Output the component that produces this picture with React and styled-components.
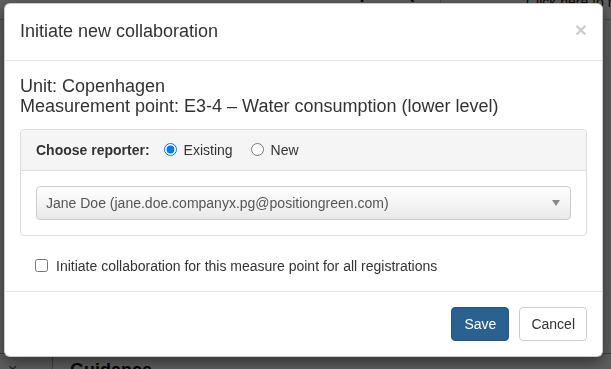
import React from "react";
import styled, { createGlobalStyle } from "styled-components";

const GlobalStyle = createGlobalStyle`
  html, body {
    margin: 0;
    padding: 0;
    background: #fff;
    font-family: "Liberation Sans", Arial, sans-serif;
    color: #333;
    font-size: 14px;
    line-height: 20px;
  }
  * { box-sizing: border-box; }
`;

const Page = styled.div`
  height: 369px;
  display: flex;
  flex-direction: column;
  justify-content: space-between;
  overflow: hidden;
`;

const PageTop = styled.div`
  display: grid;
  grid-template-columns: 178px 262px 86px 1fr;
  height: 40px;
  margin-top: -20px;
  border-bottom: 1px solid #ccc;
`;

const PageCell = styled.div`
  font-weight: ${(p) => (p.$bold ? "bold" : "normal")};
  font-size: ${(p) => (p.$bold ? "18px" : "14px")};
  color: #111;
  line-height: ${(p) => (p.$bold ? "25px" : "45px")};
  white-space: nowrap;
  overflow: hidden;
  border-left: ${(p) => (p.$line ? "1px solid #bbb" : "none")};
`;

const PageBottom = styled.div`
  display: grid;
  grid-template-columns: 52px 1fr;
  height: 16px;
  border-top: 1px solid #aaa;
`;

const BottomCell = styled.div`
  font-weight: ${(p) => (p.$bold ? "bold" : "normal")};
  font-size: ${(p) => (p.$bold ? "18px" : "16px")};
  color: ${(p) => (p.$bold ? "#111" : "#555")};
  padding-left: ${(p) => (p.$bold ? "17px" : "8px")};
  padding-top: 6px;
  line-height: 20px;
  border-left: ${(p) => (p.$line ? "1px solid #aaa" : "none")};
`;

const Overlay = styled.div`
  position: fixed;
  inset: 0;
  background: rgba(0, 0, 0, 0.63);
  padding: 3px 0 0 4px;
`;

const Modal = styled.div`
  width: 599px;
  background: #fff;
  border: 1px solid rgba(0, 0, 0, 0.2);
  border-radius: 6px;
  box-shadow: 0 5px 15px rgba(0, 0, 0, 0.5);
`;

const Header = styled.div`
  display: flex;
  justify-content: space-between;
  align-items: flex-start;
  padding: 15px;
  border-bottom: 1px solid #e5e5e5;
`;

const Title = styled.h4`
  margin: 0;
  font-size: 18px;
  font-weight: normal;
  line-height: 25.7px;
  color: #333;
`;

const Close = styled.button`
  border: 0;
  background: transparent;
  padding: 0;
  margin-top: 1px;
  font-family: "Liberation Sans", Arial, sans-serif;
  font-size: 21px;
  font-weight: bold;
  line-height: 20px;
  color: #000;
  opacity: 0.2;
  cursor: pointer;
`;

const Body = styled.div`
  padding: 15px;
`;

const Info = styled.div`
  font-size: 18px;
  line-height: 20px;
  margin-bottom: 13px;
`;

const Panel = styled.div`
  border: 1px solid #ddd;
  border-radius: 4px;
  margin-bottom: 20px;
`;

const PanelHeading = styled.div`
  display: flex;
  align-items: center;
  padding: 10px 15px;
  background: #f5f5f5;
  border-bottom: 1px solid #ddd;
  border-radius: 3px 3px 0 0;
`;

const HeadingLabel = styled.span`
  font-weight: bold;
  margin-right: 14px;
`;

const RadioLabel = styled.label`
  display: inline-flex;
  align-items: center;
  gap: 7px;
  margin-right: 18px;

  input {
    margin: 0;
    width: 13px;
    height: 13px;
  }
`;

const PanelBody = styled.div`
  padding: 15px;
`;

const Select = styled.div`
  height: 34px;
  display: flex;
  align-items: center;
  justify-content: space-between;
  padding: 0 10px 0 9px;
  border: 1px solid #ccc;
  border-radius: 4px;
  background: linear-gradient(to bottom, #fff 0%, #f4f4f4 50%, #e9e9e9 100%);
  color: #555;
`;

const Arrow = styled.span`
  width: 0;
  height: 0;
  border-left: 4px solid transparent;
  border-right: 4px solid transparent;
  border-top: 6px solid #888;
`;

const CheckRow = styled.label`
  display: flex;
  align-items: center;
  gap: 8px;
  padding-left: 15px;

  input {
    margin: 0;
    width: 13px;
    height: 13px;
  }
`;

const Footer = styled.div`
  display: flex;
  justify-content: flex-end;
  gap: 10px;
  padding: 15px;
  border-top: 1px solid #e5e5e5;
`;

const Button = styled.button`
  font-family: "Liberation Sans", Arial, sans-serif;
  font-size: 14px;
  line-height: 20px;
  padding: 6px ${(p) => (p.$primary ? "12px" : "11px")};
  border-radius: 4px;
  border: 1px solid ${(p) => (p.$primary ? "#245580" : "#ccc")};
  background: ${(p) => (p.$primary ? "#2a6190" : "#fff")};
  color: ${(p) => (p.$primary ? "#fff" : "#333")};
  cursor: pointer;
`;

export default function App() {
  return (
    <>
      <GlobalStyle />
      <Page>
        <PageTop>
          <PageCell />
          <PageCell $bold>E3-4 – Water consumption (lower level)</PageCell>
          <PageCell $line />
          <PageCell>Click here to read more</PageCell>
        </PageTop>
        <PageBottom>
          <BottomCell>×</BottomCell>
          <BottomCell $bold $line>Guidance</BottomCell>
        </PageBottom>
      </Page>
      <Overlay>
        <Modal>
          <Header>
            <Title>Initiate new collaboration</Title>
            <Close>×</Close>
          </Header>
          <Body>
            <Info>
              <div>Unit: Copenhagen</div>
              <div>Measurement point: E3-4 – Water consumption (lower level)</div>
            </Info>
            <Panel>
              <PanelHeading>
                <HeadingLabel>Choose reporter:</HeadingLabel>
                <RadioLabel>
                  <input type="radio" name="reporter" defaultChecked />
                  Existing
                </RadioLabel>
                <RadioLabel>
                  <input type="radio" name="reporter" />
                  New
                </RadioLabel>
              </PanelHeading>
              <PanelBody>
                <Select>
                  <span>Jane Doe (jane.doe.companyx.pg@positiongreen.com)</span>
                  <Arrow />
                </Select>
              </PanelBody>
            </Panel>
            <CheckRow>
              <input type="checkbox" />
              Initiate collaboration for this measure point for all registrations
            </CheckRow>
          </Body>
          <Footer>
            <Button $primary>Save</Button>
            <Button>Cancel</Button>
          </Footer>
        </Modal>
      </Overlay>
    </>
  );
}
